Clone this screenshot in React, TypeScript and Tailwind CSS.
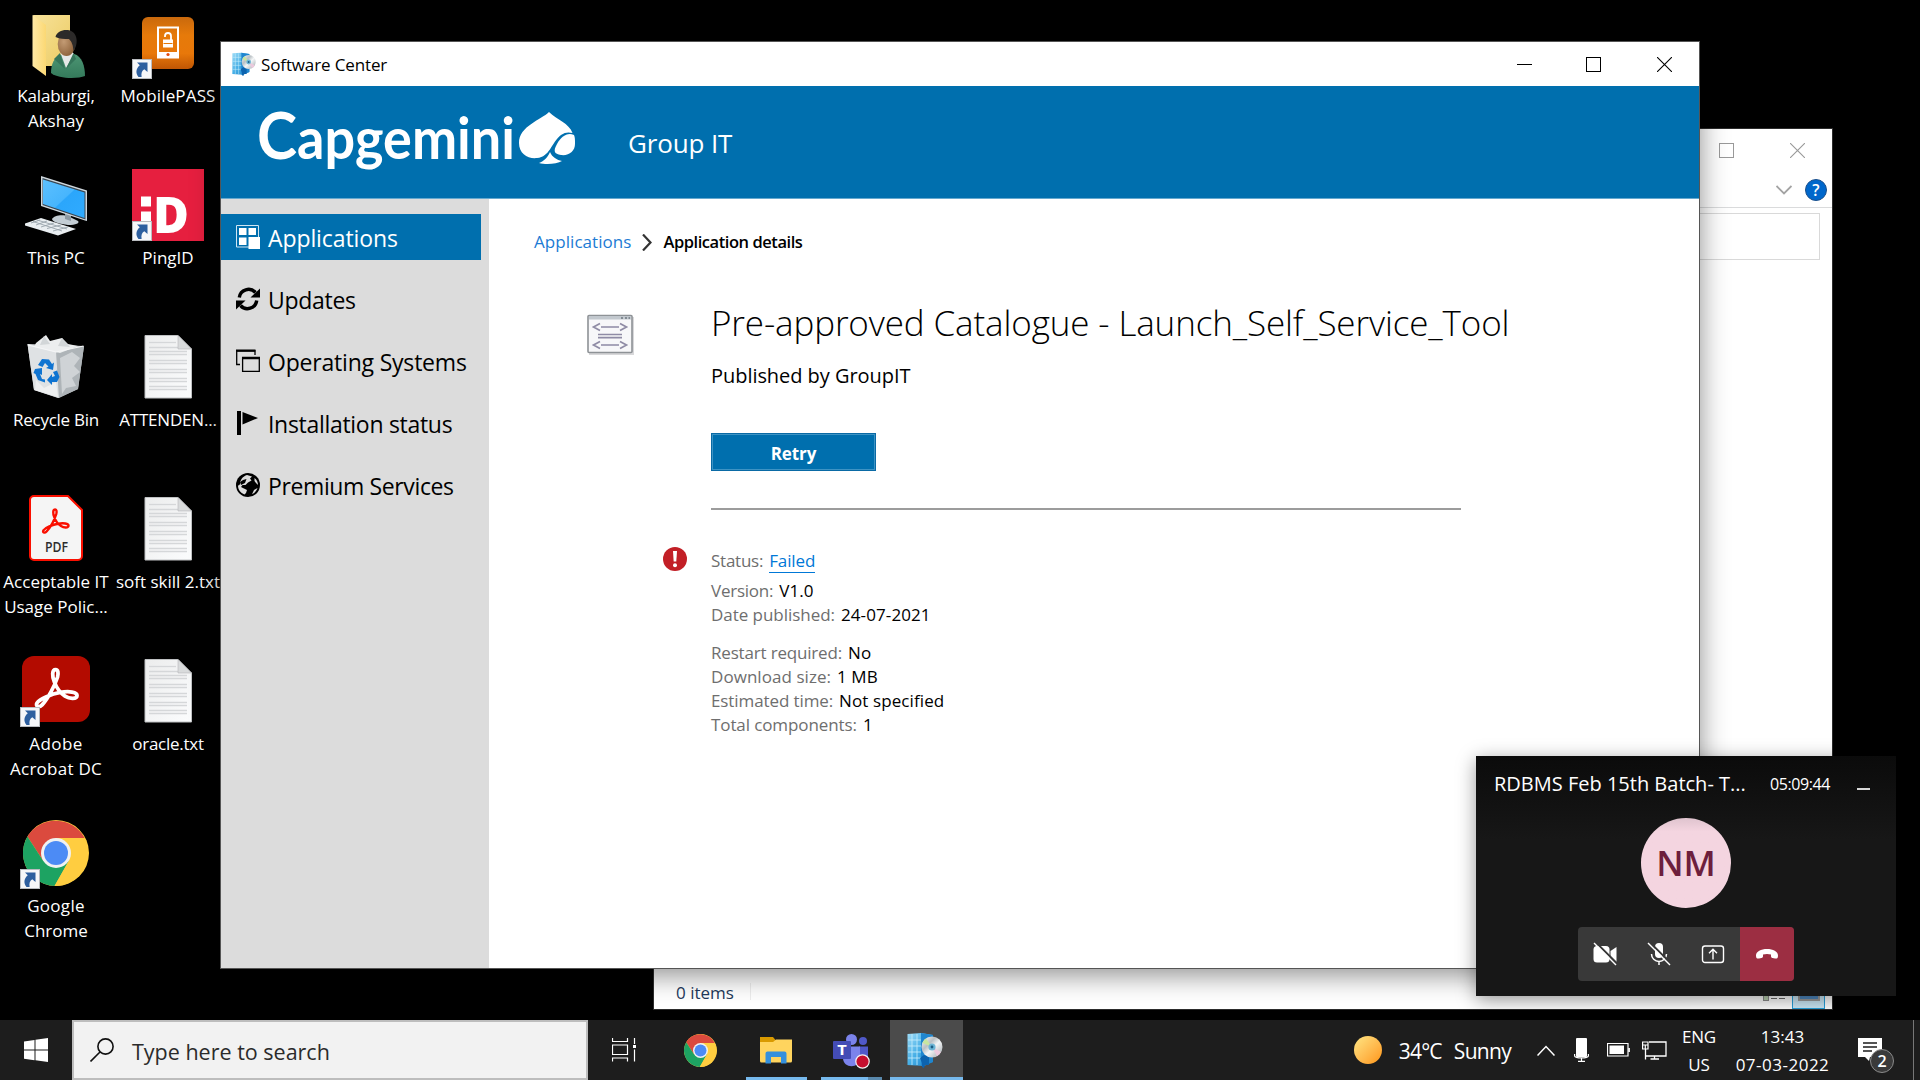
import React from "react";

/* ---------- desktop icons ---------- */

function ShortcutArrow() {
  return (
    <svg className="absolute bottom-0 left-0 h-5 w-5" viewBox="0 0 20 20">
      <rect x="0.5" y="0.5" width="19" height="19" fill="#f6f7f9" stroke="#b9bcc0" />
      <path d="M5 3.5 H15.5 V13 L12.3 10.2 C9.8 11.6 9 14 9.6 18 H6.5 C3.4 14.500 3.800 9.500 7.800 6.300 Z" fill="#2d5f9f" />
    </svg>
  );
}

function UserFolder() {
  return (
    <svg className="h-[72px] w-[72px]" viewBox="0 0 72 72">
      <defs>
        <linearGradient id="uf1" x1="0" y1="0" x2="1" y2="1">
          <stop offset="0" stopColor="#f7e29a" />
          <stop offset="1" stopColor="#eccb62" />
        </linearGradient>
        <linearGradient id="uf2" x1="0" y1="0" x2="1" y2="0">
          <stop offset="0" stopColor="#ffe9a6" />
          <stop offset="1" stopColor="#fbd874" />
        </linearGradient>
        <linearGradient id="uf3" x1="0" y1="0" x2="0" y2="1">
          <stop offset="0" stopColor="#4d9674" />
          <stop offset="1" stopColor="#347a5b" />
        </linearGradient>
        <radialGradient id="uf4" cx="0.35" cy="0.4" r="0.7">
          <stop offset="0" stopColor="#c39b74" />
          <stop offset="1" stopColor="#8a5f38" />
        </radialGradient>
      </defs>
      <path d="M13 8 H50 V59 H26 Z" fill="url(#uf1)" />
      <path d="M12.500 8 L26 18 V69 L12.500 59 Z" fill="url(#uf2)" />
      <path d="M31 66 C31 57 34 50 41 48 L54 47 C62 49 65 59 65 69 C58 72 38 72 31 66 Z" fill="url(#uf3)" />
      <path d="M40.500 46 L46 61 L54 47 L50 42 Z" fill="#e6e9e8" />
      <path d="M40 46 L45 62 L34 52 Z" fill="#35755a" />
      <path d="M53.500 46 L56 52 L46 62 Z" fill="#35755a" />
      <ellipse cx="46.500" cy="37" rx="8.800" ry="12" fill="url(#uf4)" />
      <path d="M35.500 30 C37 23 47 21.500 52 24.500 C58 28 58 38 53.500 44 C53 38 52 35 49 32 C44 32 40 32 35.500 30 Z" fill="#2c2a29" />
    </svg>
  );
}

function MobilePass() {
  return (
    <svg className="h-[72px] w-[72px]" viewBox="0 0 72 72">
      <defs>
        <linearGradient id="mp" x1="0" y1="0" x2="0" y2="1">
          <stop offset="0" stopColor="#c9690d" />
          <stop offset="0.35" stopColor="#e67a0a" />
          <stop offset="0.7" stopColor="#e8780a" />
          <stop offset="1" stopColor="#c05604" />
        </linearGradient>
      </defs>
      <rect x="10" y="10" width="52" height="52" rx="6" fill="url(#mp)" />
      <rect x="26" y="20.500" width="20" height="30" fill="none" stroke="#fff" strokeWidth="2" />
      <path d="M25 45 H47 V51 H25 Z" fill="#fff" />
      <circle cx="36" cy="47.500" r="1.600" fill="#e34b10" />
      <rect x="31" y="32.500" width="10" height="8" fill="#fff" />
      <path d="M31.500 36.500 H40.500" stroke="#e67a0a" strokeWidth="1" />
      <path d="M33 30 V29 A3 3 0 0 1 39 29 V33" fill="none" stroke="#fff" strokeWidth="1.800" />
    </svg>
  );
}

function ThisPc() {
  return (
    <svg className="h-[72px] w-[72px]" viewBox="0 0 72 72">
      <defs>
        <linearGradient id="pc" x1="0" y1="0" x2="1" y2="1">
          <stop offset="0" stopColor="#5cc0ff" />
          <stop offset="0.5" stopColor="#47b5fd" />
          <stop offset="0.52" stopColor="#2ba6fb" />
          <stop offset="1" stopColor="#30abff" />
        </linearGradient>
      </defs>
      <path d="M32 50 C34 46 44 45 50 48 L58 52 C60 54 56 56 48 56 C40 55 32 53 32 50 Z" fill="#c3cdd4" />
      <path d="M45 44 L51 46 V52 L45 50 Z" fill="#8d9aa3" />
      <path d="M21 7 L67 21.500 V52 L65 51.500 L21 37 Z" fill="#cfd8de" />
      <path d="M22.500 9 L65.500 22.500 V50.500 L22.500 36 Z" fill="#3a4650" />
      <path d="M23 10.500 L64.500 23.500 V49 L23 35 Z" fill="url(#pc)" />
      <path d="M5 54.500 L21 49 L56 60 L38 66.500 L5 56.500 Z" fill="#e9eef1" />
      <path d="M11 54 L20 51 M16 56 L27 52 M21 58 L34 54 M27 59.500 L41 56 M33 62 L48 58 M13 52.500 L42 62 M17 51 L47 60" stroke="#98a4ac" strokeWidth="0.900" />
    </svg>
  );
}

function PingId() {
  return (
    <svg className="h-[72px] w-[72px] overflow-visible" viewBox="0 0 72 72">
      <rect width="72" height="72" fill="#e61f3f" />
      <rect x="9" y="27.500" width="10" height="10" fill="#fff" />
      <rect x="9" y="42.500" width="10" height="20" fill="#fff" />
      <text x="21" y="63.500" fontFamily="Open Sans, sans-serif" fontWeight="800" fontSize="49.500" fill="#fff" textLength="36" lengthAdjust="spacingAndGlyphs">D</text>
    </svg>
  );
}

function RecycleBin() {
  return (
    <svg className="h-[72px] w-[72px]" viewBox="0 3 72 72">
      <path d="M7.500 16 L64 18 L58 61 L38 70 L14 62 Z" fill="#c9cdd0" />
      <path d="M7.500 16 L36 22 L39 70 L14 62 Z" fill="#dfe2e4" />
      <path d="M36 22 L64 18 L58 61 L39 70 Z" fill="#aeb4b8" />
      <path d="M52 24 L60 30 L54 38 L60 44 L52 50 L56 58 L46 60 L42 66 L40 30 Z" fill="#cfd3d6" />
      <path d="M16 15 L26 7 L30 13 L42 10 L48 16 L58 18 L40 25 L14 19 Z" fill="#eceeef" />
      <path d="M24 8 L30 16 L20 17 Z M42 10 L50 19 L38 18 Z" fill="#d2d6d8" />
      <path d="M8 17 L36 24 L63.500 18" fill="none" stroke="#f5f6f7" strokeWidth="1.200" />
      <path d="M16 52 L24 60 L36 54 L38 69 L15 62 Z" fill="#eff0f1" />
      <g fill="#0f74d1">
        <path d="M18 37 L22 31 L29 31.500 L32 36 L34 34.500 L33 42 L26 40 L28.500 38.500 L25 35 L22.500 39 Z" />
        <path d="M15 41 L22 40 L22 47 L20 46 L22 51 L25 51.500 V54.500 L18 52 L15.500 46 L13.500 45 Z" />
        <path d="M27 52 L32 46 V49 L35 48 L33 44 L37 42.500 L39.500 49 L37 54 L32 54 V57 Z" />
      </g>
    </svg>
  );
}

function TextFile() {
  const rows = [14, 19, 23, 26, 32, 35, 41, 44, 50, 53, 58, 61];
  return (
    <svg className="h-[72px] w-[72px]" viewBox="0 0 72 72">
      <defs>
        <linearGradient id="tf" x1="0" y1="0" x2="1" y2="1">
          <stop offset="0" stopColor="#eceded" />
          <stop offset="1" stopColor="#fbfcfd" />
        </linearGradient>
      </defs>
      <path d="M13 4.500 H46 L59.500 18 V67 H13 Z" fill="url(#tf)" stroke="#bfc1c3" />
      {rows.map((y) => (
        <path key={y} d={`M17 ${y - 2.5} H${y < 18 ? 44 : 55}`} stroke="#d5d7d9" strokeWidth="1.300" />
      ))}
      <path d="M46 4.500 V18 H59.500 Z" fill="#d9dbdc" stroke="#b5b7b9" strokeWidth="0.600" />
    </svg>
  );
}

const acrobatPath =
  "M11.500 2.500 C9.500 2.500 9.600 6 10.800 9 C11.800 11.600 14 15 16.500 16.600 C19 18.200 22.800 18.200 22.900 16.300 C23 14.300 18.500 13.800 14 14.600 C9.500 15.400 3 18 1.600 20.200 C0.600 22 2.600 23 4.300 21.200 C7.500 17.800 11 11 12.500 6.500 C13.100 4.300 12.800 2.500 11.500 2.500 Z";

function PdfFile() {
  return (
    <svg className="h-[72px] w-[72px]" viewBox="0 0 72 72">
      <path d="M14 3 H48 L62 17 V63 A4 4 0 0 1 58 67 H14 A4 4 0 0 1 10 63 V7 A4 4 0 0 1 14 3 Z" fill="#f5f5f5" stroke="#fa0f00" strokeWidth="2" />
      <path d={acrobatPath} transform="translate(21.500 13.500) scale(1.180)" fill="none" stroke="#fa0f00" strokeWidth="2" />
      <text x="25" y="59" fontFamily="Open Sans, sans-serif" fontWeight="600" fontSize="14.500" fill="#2c2c2c" textLength="23" lengthAdjust="spacingAndGlyphs">PDF</text>
    </svg>
  );
}

function Acrobat() {
  return (
    <svg className="h-[72px] w-[72px]" viewBox="0 0 72 72">
      <rect x="2" y="1" width="68" height="66" rx="12" fill="#b30b00" />
      <path d={acrobatPath} transform="translate(14 10) scale(1.880)" fill="none" stroke="#fff" strokeWidth="2" />
    </svg>
  );
}

function Chrome({ className }: { className: string }) {
  return (
    <svg className={className} viewBox="0 0 66 66">
      <circle cx="33" cy="33" r="33" fill="#ffcd40" />
      <path d="M33 18 H61.600 A33 33 0 0 0 4.400 16.500 L20 40.500 Z" fill="#db4a3e" />
      <path d="M4.400 16.500 A33 33 0 0 0 31.500 66 L46 40.500 L20 40.500 Z" fill="#1da362" />
      <path d="M46 40.500 L31.500 66 A33 33 0 0 0 61.600 18 H33 Z" fill="#ffcd40" />
      <circle cx="33" cy="33" r="15" fill="#f1f1f1" />
      <circle cx="33" cy="33" r="12" fill="#4c8bf5" />
    </svg>
  );
}

function DesktopIcon({ icon, lines, shortcut }: { icon: React.ReactNode; lines: React.ReactNode; shortcut?: boolean }) {
  return (
    <div className="flex h-[162px] w-28 flex-col items-center pt-[7px]">
      <div className="relative h-[72px] w-[72px]">
        {icon}
        {shortcut && <ShortcutArrow />}
      </div>
      <div className="mt-[4px] text-center text-[17px] leading-[25px] whitespace-nowrap text-white">{lines}</div>
    </div>
  );
}

/* ---------- shared window parts ---------- */

function SoftwareIcon({ className }: { className: string }) {
  return (
    <svg className={className} viewBox="0 0 36 36">
      <defs>
        <linearGradient id="sw" x1="0" y1="0" x2="1" y2="1">
          <stop offset="0" stopColor="#9fdcf7" />
          <stop offset="0.5" stopColor="#45aee6" />
          <stop offset="1" stopColor="#1a7cc4" />
        </linearGradient>
        <linearGradient id="cd" x1="0" y1="0" x2="1" y2="1">
          <stop offset="0" stopColor="#ffffff" />
          <stop offset="0.35" stopColor="#b9c0c4" />
          <stop offset="0.55" stopColor="#f4f6f7" />
          <stop offset="1" stopColor="#9aa2a8" />
        </linearGradient>
      </defs>
      <path d="M0.500 2 L14 1 L26 3 V30 L17 34 L0.500 33 Z" fill="url(#sw)" />
      <path d="M14 1 V34 L26 30 V3 Z" fill="#1f86cf" />
      <path d="M1 8 H14 M1 14 H14 M1 20 H14 M1 26 H14 M5 2 V33 M10 2 V33" stroke="#c9effc" strokeWidth="0.800" />
      <path d="M13 26 L17 23 L22 25 V33 L18 33 L17 36 L15 35 V31 Z" fill="#0d63ae" />
      <circle cx="25" cy="15" r="10.500" fill="url(#cd)" />
      <path d="M25 15 L15.500 11 A10.500 10.500 0 0 1 19 6.500 Z" fill="#c7e6a0" />
      <path d="M25 15 L34 20 A10.500 10.500 0 0 1 30 24.300 Z" fill="#ecc9dd" />
      <circle cx="25" cy="15" r="3.600" fill="#6fb6d6" />
      <circle cx="25" cy="15" r="1.400" fill="#1e5f86" />
    </svg>
  );
}

function Maximize({ className }: { className: string }) {
  return (
    <svg className={className} viewBox="0 0 15 15">
      <rect x="0.500" y="0.500" width="14" height="14" fill="none" stroke="currentColor" />
    </svg>
  );
}
function Close({ className }: { className: string }) {
  return (
    <svg className={className} viewBox="0 0 15 15">
      <path d="M0 0 L15 15 M15 0 L0 15" stroke="currentColor" strokeWidth="1.100" />
    </svg>
  );
}

/* ---------- explorer window behind ---------- */

function ExplorerWindow() {
  return (
    <div className="absolute top-[128px] left-[653px] flex h-[882px] w-[1180px] flex-col border border-[#2c2c2c] bg-white">
      <div className="flex h-[44px] justify-end pt-[14px] pr-[27px] text-[#999]">
        <Maximize className="mr-[56px] h-[15px] w-[15px]" />
        <Close className="h-[15px] w-[15px]" />
      </div>
      <div className="flex h-[35px] items-center justify-end gap-[13px] border-b border-[#dadbdc] pr-[5px]">
        <svg className="h-[10px] w-4" viewBox="0 0 16 10">
          <path d="M0.500 1 L8 8.500 L15.500 1" fill="none" stroke="#a3a3a3" strokeWidth="1.800" />
        </svg>
        <div className="flex h-[22px] w-[22px] items-center justify-center rounded-full border border-[#1a4f8c] bg-[#0067cb] text-[16px] leading-none font-semibold text-white">?</div>
      </div>
      <div className="mt-[5px] mr-[12px] h-[47px] border border-[#d9d9d9]" />
      <div className="mt-auto flex h-[41px] items-end pl-[22px]">
        <span className="mb-[4px] text-[17px] text-[#1e395b]">0 items</span>
        <div className="mb-[9px] ml-[16px] h-[17px] w-px bg-[#ededed]" />
        <div className="ml-auto flex items-end pr-[7px]">
          <div className="mb-[8px] h-[10px] w-[6px] border border-[#8c8c8c] bg-[#b8cfae]" />
          <div className="mr-[7px] mb-[10px] ml-[2px] flex gap-[2px]">
            <div className="h-px w-[6px] bg-[#666]" />
            <div className="h-px w-[6px] bg-[#666]" />
          </div>
          <div className="flex h-[31px] w-[33px] items-end justify-center border border-[#26a0da] bg-[#cbe8f6] pb-[7px]">
            <div className="h-4 w-[22px] border-2 border-[#9c9c9c] bg-[#4e88bf]" />
          </div>
        </div>
      </div>
    </div>
  );
}

/* ---------- Software Center ---------- */

function CapgeminiLogo() {
  return (
    <svg className="h-[80px] w-[320px] overflow-visible" viewBox="0 0 320 80">
      <text x="-1" y="56.500" fontFamily="Lato, sans-serif" fontWeight="700" fontSize="58" fill="#fff" textLength="258" lengthAdjust="spacingAndGlyphs">
        <tspan fontSize="65">C</tspan>apgemini
      </text>
      <path d="M291 10 C283 18 261 24 261 41 C261 52 270 57 279 56 C292 55 293 41 303 33 C307 30 311 30 314.500 31 C311 21 299 18 291 10 Z" fill="#fff" />
      <path d="M316 33 C309 30 303 35 299 42 C295 49 296 52 303 53 C311 54 317 49 317 42 C317 38 317 35 316 33 Z" fill="#fff" />
      <path d="M292 50 C290 55 286 59 281 61 C288 63 299 62 304 59 C299 58 294 55 292 50 Z" fill="#fff" />
    </svg>
  );
}

const navIcons = {
  apps: (
    <svg className="h-6 w-6" viewBox="0 0 24 24">
      <path d="M0.500 0.500 H22.500 V22 H0.500 Z" fill="none" stroke="#cfe5f3" />
      <path d="M3 3 H10.500 V10 H3 Z M12.500 3 H20 V10 H12.500 Z M3 12.500 H10.500 V20 H3 Z M12.500 12 H24 V24 H12.500 Z" fill="#fff" />
    </svg>
  ),
  updates: (
    <svg className="h-6 w-6" viewBox="0 0 24 24">
      <path d="M3.300 10.500 A9.300 9.300 0 0 1 19.500 5.500" fill="none" stroke="#000" strokeWidth="3.400" />
      <path d="M24 1.500 V10.500 H14.500 Z" fill="#000" />
      <path d="M20.700 13.500 A9.300 9.300 0 0 1 4.500 18.500" fill="none" stroke="#000" strokeWidth="3.400" />
      <path d="M0 22.500 V13.500 H9.500 Z" fill="#000" />
    </svg>
  ),
  os: (
    <svg className="h-6 w-6" viewBox="0 0 24 24">
      <path d="M4 15.500 H0.700 V2 H19 V6" fill="none" stroke="#000" strokeWidth="1.300" />
      <path d="M0 1.500 H19.500" stroke="#000" strokeWidth="2" />
      <path d="M6.600 9 H23.300 V22.300 H6.600 Z" fill="none" stroke="#000" strokeWidth="1.300" />
      <path d="M6 9 H24" stroke="#000" strokeWidth="2.500" />
    </svg>
  ),
  flag: (
    <svg className="h-6 w-6" viewBox="0 0 24 24">
      <path d="M1 0 H5 V24 H1 Z M6.500 1 L22 7 L6.500 13.500 Z" fill="#000" />
    </svg>
  ),
  globe: (
    <svg className="h-6 w-6" viewBox="0 0 24 24">
      <circle cx="12" cy="12" r="12" fill="#000" />
      <path d="M11 2 L16 3.500 L14 5.500 L15.500 7.500 L12 9.500 L9.500 12 L6.500 12 L5 14 L8 15.500 L11 17 L10 20 L8.500 21.500 C4.500 20 2 16.500 2 12.500 C3.500 12.500 4.500 11 4 9 L5.500 6 C7 4 9 2.500 11 2 Z" fill="#dcdcdc" />
      <path d="M4 9 L7 7 L10.500 6 L9 10 L5 12 Z" fill="#000" />
      <path d="M18.500 5 C21 7 22 9.500 22 12 L20 10 L18.500 8 Z M21.500 15 C20.500 18 18.500 20 16 21.200 L18 17 Z" fill="#dcdcdc" />
    </svg>
  ),
};

function NavItem({ icon, label, active, tracking }: { icon: React.ReactNode; label: string; active?: boolean; tracking: string }) {
  return (
    <div className={`flex h-[46px] w-[260px] items-center gap-2 pl-[15px] text-[23px] ${active ? "bg-[#006fae] text-white" : "text-black"}`}>
      {icon}
      <span className={`pt-[2px] whitespace-nowrap ${tracking}`}>{label}</span>
    </div>
  );
}

function Detail({ label, value, tracking }: { label: string; value: string; tracking: string }) {
  return (
    <div className="flex h-6 items-center gap-[6px] leading-6">
      <span className={`text-[#6e6e6e] ${tracking}`}>{label}</span>
      <span className="tracking-[0.1px]">{value}</span>
    </div>
  );
}

function SoftwareCenter() {
  return (
    <div className="absolute top-[41px] left-[220px] flex h-[928px] w-[1480px] flex-col border border-[#555] bg-white shadow-[0_6px_26px_rgba(0,0,0,0.45)]">
      <div className="flex h-[44px] items-center pr-[27px] pl-[11px]">
        <SoftwareIcon className="h-6 w-6" />
        <span className="ml-[5px] pt-[2px] text-[17px] tracking-[-0.13px]">Software Center</span>
        <div className="mr-[54px] ml-auto h-px w-[15px] bg-black" />
        <Maximize className="mr-[56px] h-[15px] w-[15px]" />
        <Close className="h-[15px] w-[15px]" />
      </div>
      <div className="flex h-[113px] items-center border-b border-[#66a9cf] bg-[#006fae] pl-[37px] text-white">
        <CapgeminiLogo />
        <span className="ml-[50px] pt-[2px] text-[26px] tracking-[-0.15px]">Group IT</span>
      </div>
      <div className="flex flex-1">
        <nav className="flex w-[268px] flex-col gap-4 bg-[#dcdcdc] pt-[15px]">
          <NavItem icon={navIcons.apps} label="Applications" active tracking="tracking-[-0.1px]" />
          <NavItem icon={navIcons.updates} label="Updates" tracking="tracking-[-0.3px]" />
          <NavItem icon={navIcons.os} label="Operating Systems" tracking="tracking-[-0.2px]" />
          <NavItem icon={navIcons.flag} label="Installation status" tracking="tracking-[-0.3px]" />
          <NavItem icon={navIcons.globe} label="Premium Services" tracking="tracking-[-0.38px]" />
        </nav>
        <main className="flex flex-1 flex-col pt-[31px] text-[17px] text-black">
          <div className="flex h-6 items-center pl-[45px]">
            <span className="tracking-[0.05px] text-[#1c7bd4]">Applications</span>
            <svg className="mx-[11px] h-[17px] w-[10px]" viewBox="0 0 10 17">
              <path d="M1 0.500 L8.500 8.500 L1 16.500" fill="none" stroke="#333" strokeWidth="2.200" />
            </svg>
            <span className="text-[16.500px] font-semibold tracking-[-0.45px]">Application details</span>
          </div>
          <div className="mt-[44px] flex">
            <div className="w-[222px] pt-[16px] pl-[98px]">
              <svg className="h-[42px] w-[48px]" viewBox="0 0 48 42">
                <rect x="2" y="3" width="45" height="38" fill="#d8d8da" />
                <rect x="1" y="1.500" width="44" height="37" rx="1" fill="#f7f7f9" stroke="#8e9296" strokeWidth="1.600" />
                <rect x="2" y="2" width="42" height="3.500" fill="#c2c8ce" />
                <path d="M34 4 H36 M38 4 H40 M41.500 4 H43" stroke="#6d7780" strokeWidth="1.500" />
                <g fill="none" stroke="#8f8ba5" strokeWidth="1.700">
                  <path d="M13 9.500 L6.500 13 L13 16.500 M33 9.500 L39.500 13 L33 16.500 M14 13 H32 M13 27.500 L6.500 31 L13 34.500 M33 27.500 L39.500 31 L33 34.500 M14 31 H32 M11 20.500 H35 M11 23.700 H35" />
                </g>
              </svg>
            </div>
            <div className="flex flex-col items-start">
              <h1 className="pt-px text-[35px] leading-[48px] font-light tracking-[-0.13px] whitespace-nowrap">Pre-approved Catalogue - Launch_Self_Service_Tool</h1>
              <p className="mt-[15px] text-[20px] leading-7 tracking-[-0.05px]">Published by GroupIT</p>
              <button className="mt-[43px] flex h-[38px] w-[165px] items-center justify-center border border-[#0a6aa5] bg-[#006fae] pt-[3px] text-[17px] font-bold text-white shadow-[inset_0_0_0_1px_#3d93c4]">
                <span className="tracking-[-0.1px]">Retry</span>
              </button>
              <div className="mt-[37px] h-[2px] w-[750px] bg-[#9c9c9c]" />
            </div>
          </div>
          <div className="mt-[38px] flex pl-[174px]">
            <svg className="mt-[-1px] mr-6 h-6 w-6" viewBox="0 0 24 24">
              <circle cx="12" cy="12" r="12" fill="#c21f26" />
              <path d="M10 4 H14 L13.300 14.500 H10.700 Z" fill="#fff" />
              <circle cx="12" cy="18.300" r="2" fill="#fff" />
            </svg>
            <div className="pt-px">
              <div className="flex h-6 items-start gap-[6px] leading-[23px]">
                <span className="tracking-[-0.25px] text-[#6e6e6e]">Status:</span>
                <span className="border-b border-[#0078d7] tracking-[-0.1px] text-[#0078d7]">Failed</span>
              </div>
              <div className="mt-[6px]">
                <Detail label="Version:" value="V1.0" tracking="tracking-[-0.25px]" />
                <Detail label="Date published:" value="24-07-2021" tracking="tracking-[-0.04px]" />
              </div>
              <div className="mt-[14px]">
                <Detail label="Restart required:" value="No" tracking="tracking-[-0.18px]" />
                <Detail label="Download size:" value="1 MB" tracking="tracking-[0.05px]" />
                <Detail label="Estimated time:" value="Not specified" tracking="tracking-[-0.1px]" />
                <Detail label="Total components:" value="1" tracking="tracking-[-0.1px]" />
              </div>
            </div>
          </div>
        </main>
      </div>
    </div>
  );
}

/* ---------- Teams call card ---------- */

function CallCard() {
  return (
    <div className="absolute top-[756px] left-[1476px] flex h-[240px] w-[420px] flex-col items-center bg-linear-to-b from-[#0b0b0b] via-[#171717] via-35% to-[#171717] text-white shadow-[0_4px_18px_rgba(0,0,0,0.4)]">
      <div className="flex h-[56px] w-full items-center pl-[18px]">
        <span className="text-[20px] whitespace-nowrap">RDBMS Feb 15th Batch- T...</span>
        <span className="ml-auto text-[16px] tracking-[-0.4px]">05:09:44</span>
        <div className="mt-[10px] mr-[26px] ml-[27px] h-[1.500px] w-[13px] bg-[#d8d8d8]" />
      </div>
      <div className="mt-[6px] flex h-[90px] w-[90px] items-center justify-center rounded-full bg-linear-to-b from-[#dfc3ce] to-[#f4d5e0] to-15% text-[35px] font-semibold text-[#6d1f3d]">
        <span>NM</span>
      </div>
      <div className="mt-[19px] flex h-[54px] overflow-hidden rounded bg-[#393939]">
        <div className="flex w-[54px] items-center justify-center">
          <svg className="h-6 w-6" viewBox="0 0 24 24">
            <rect x="0.500" y="4" width="16" height="16.500" rx="3.500" fill="#fff" />
            <path d="M17.500 9 L23.500 5 V20 L17.500 15.500 Z" fill="#fff" />
            <path d="M2.500 0 L24 21.500" stroke="#393939" strokeWidth="2" />
            <path d="M1 1 L23 23" stroke="#fff" strokeWidth="1.400" />
          </svg>
        </div>
        <div className="flex w-[54px] items-center justify-center">
          <svg className="h-6 w-6" viewBox="0 0 24 24">
            <rect x="8" y="1" width="8" height="15" rx="4" fill="#fff" />
            <path d="M4.500 12 A7.500 7.500 0 0 0 19.500 12 M12 19.500 V23" fill="none" stroke="#fff" strokeWidth="1.500" />
            <path d="M2.500 0 L24 21.500" stroke="#393939" strokeWidth="2" />
            <path d="M1 1 L23 23" stroke="#fff" strokeWidth="1.400" />
          </svg>
        </div>
        <div className="flex w-[54px] items-center justify-center">
          <svg className="h-6 w-6" viewBox="0 0 24 24">
            <rect x="1.500" y="4" width="21" height="16.500" rx="2.500" fill="none" stroke="#fff" strokeWidth="1.400" />
            <path d="M12 17.500 V7.500 M8 11.300 L12 7.300 L16 11.300" fill="none" stroke="#fff" strokeWidth="1.400" />
          </svg>
        </div>
        <div className="flex w-[54px] items-center justify-center bg-[#9c2e42]">
          <svg className="h-6 w-6" viewBox="0 0 24 24">
            <path d="M12 7 C18 7 23 9.500 23 13.500 C23 16.200 22 16.800 20 16.500 L17.500 16 C16.300 15.700 16 15 16 14 V12.600 C13.500 11.800 10.500 11.800 8 12.600 V14 C8 15 7.700 15.700 6.500 16 L4 16.500 C2 16.800 1 16.200 1 13.500 C1 9.500 6 7 12 7 Z" fill="#fff" />
          </svg>
        </div>
      </div>
    </div>
  );
}

/* ---------- taskbar ---------- */

function Taskbar() {
  return (
    <div className="absolute bottom-0 left-0 flex h-[60px] w-full bg-[#1d1d1d] text-white">
      <div className="flex w-[72px] items-center justify-center">
        <svg className="h-6 w-6" viewBox="0 0 24 24">
          <path d="M0 3.500 L10.500 2 V11.500 H0 Z M11.500 1.800 L24 0 V11.500 H11.500 Z M0 12.500 H10.500 V22.200 L0 20.800 Z M11.500 12.500 H24 V24 L11.500 22.300 Z" fill="#fff" />
        </svg>
      </div>
      <div className="flex w-[516px] items-center border-2 border-[#bdbdbd] bg-[#f2f2f2] pl-4 text-[#2b2b2b]">
        <svg className="h-6 w-6" viewBox="0 0 24 24">
          <circle cx="15.500" cy="8.500" r="7.600" fill="none" stroke="#111" strokeWidth="1.600" />
          <path d="M10 14 L0.500 23.500" stroke="#111" strokeWidth="1.600" />
        </svg>
        <span className="ml-[18px] pt-[4px] text-[21.500px]">Type here to search</span>
      </div>
      <svg className="mt-[18px] ml-6 h-6 w-6" viewBox="0 0 24 24">
        <path d="M0.500 0 V3.500 H15.500 V0 M0.500 7 H15.500 V16.500 H0.500 Z M0.500 23.500 V20 H15.500 V23.500 M22.500 0 V6 M22.500 11.500 V23.500" fill="none" stroke="#fff" strokeWidth="1.200" />
        <rect x="21" y="7" width="3" height="3" fill="#fff" />
      </svg>
      <div className="ml-[48px] flex w-[33px] items-center">
        <Chrome className="h-[33px] w-[33px]" />
      </div>
      <div className="ml-[29px] flex w-[61px] flex-col border-b-[3px] border-[#76b9ed] pt-[17px] pl-[14px]">
        <svg className="h-[27px] w-8" viewBox="0 0 32 27">
          <path d="M0 0 H13 L15.500 3 V6 H0 Z" fill="#d99a00" />
          <path d="M0 5 H13 L16 2.500 H32 V24 A1.500 1.500 0 0 1 30.500 25.500 H1.500 A1.500 1.500 0 0 1 0 24 Z" fill="#ffd45e" />
          <path d="M5.500 26.500 V16.500 A2 2 0 0 1 7.500 14.500 H24.500 A2 2 0 0 1 26.500 16.500 V26.500 H21 V20 H11 V26.500 Z" fill="#3590dc" />
        </svg>
      </div>
      <div className="relative ml-[14px] w-[61px]">
        <svg className="mt-[13px] ml-3 h-9 w-[38px]" viewBox="0 0 38 36">
          <circle cx="18.500" cy="6.500" r="5.500" fill="#7b83eb" />
          <circle cx="30" cy="8" r="4" fill="#5059c9" />
          <path d="M26 13.500 H35 V24 C33 29 28 29 26 27 Z" fill="#5059c9" />
          <path d="M10 13.500 H27 V25 C27 36 10 36 10 25 Z" fill="#7b83eb" />
          <rect x="0" y="8" width="18" height="18" rx="1" fill="#444cb5" />
          <text x="4.300" y="22" fontFamily="Open Sans, sans-serif" fontWeight="700" fontSize="14.500" fill="#fff" textLength="9.500" lengthAdjust="spacingAndGlyphs">T</text>
          <circle cx="29.500" cy="28.500" r="6.700" fill="#c50f2e" stroke="#f3f3f3" strokeWidth="1.200" />
        </svg>
        <div className="absolute bottom-0 left-0 flex h-[3px] w-full">
          <div className="w-[47px] bg-[#76b9ed]" />
          <div className="w-[14px] bg-[#5a89ad]" />
        </div>
      </div>
      <div className="ml-2 flex w-[73px] border-b-[3px] border-[#76b9ed] bg-[#4b4b4b] pt-3 pl-[17px]">
        <SoftwareIcon className="h-9 w-9" />
      </div>
      <div className="ml-auto flex items-center">
        <div className="h-[28px] w-[28px] rounded-full bg-linear-to-br from-[#ffe682] to-[#ff9500]" />
        <span className="ml-[17px] pt-[4px] text-[21px] tracking-[-0.8px]">34°C</span>
        <span className="ml-[12px] pt-[4px] text-[21px] tracking-[-0.7px]">Sunny</span>
        <svg className="ml-[26px] h-[11px] w-[18px]" viewBox="0 0 18 11">
          <path d="M0.500 10.500 L9 1.500 L17.500 10.500" fill="none" stroke="#fff" strokeWidth="1.500" />
        </svg>
        <svg className="ml-[19px] h-6 w-[15px]" viewBox="0 0 15 24">
          <rect x="2" y="0" width="11" height="19" rx="1" fill="#fff" />
          <path d="M0.600 16 V18 C1.500 20.500 13.500 20.500 14.400 18 V16 M7.500 20 V23 M4 23.400 H11" fill="none" stroke="#fff" strokeWidth="1.200" />
        </svg>
        <svg className="ml-[18px] h-[14px] w-[23px]" viewBox="0 0 23 14">
          <path d="M0.500 0.500 H21 V13 H0.500 Z M22.300 5 V9" fill="none" stroke="#fff" strokeWidth="1.200" />
          <rect x="2.500" y="2.500" width="14.500" height="8.500" fill="#fff" />
        </svg>
        <svg className="ml-[12px] h-[19px] w-[25px]" viewBox="0 0 25 19">
          <path d="M7 1 H24 V15 H3.500 M12.500 15 V18 M8.500 18 H17 M3.500 8 V18.500" fill="none" stroke="#fff" strokeWidth="1.300" />
          <path d="M0.600 1 H6 V8 H0.600 Z M0.600 4 H6 M3.300 4 V8" fill="none" stroke="#fff" strokeWidth="1.200" />
        </svg>
        <div className="ml-[14px] flex w-[36px] flex-col items-center pt-[2px] text-[17px] leading-7">
          <span className="tracking-[-0.2px]">ENG</span>
          <span>US</span>
        </div>
        <div className="ml-[18px] flex w-[95px] flex-col items-center pt-[2px] text-[17px] leading-7">
          <span>13:43</span>
          <span className="tracking-[0.5px]">07-03-2022</span>
        </div>
        <div className="relative ml-[28px] h-[38px] w-[38px]">
          <svg className="h-[38px] w-[38px] overflow-visible" viewBox="0 0 38 38">
            <path d="M0 7 H24 V26 H12 L11 30 L7 26 H0 Z" fill="#fff" />
            <path d="M5 12 H19 M5 16 H19 M5 20 H14" stroke="#1d1d1d" strokeWidth="1.400" />
          </svg>
          <div className="absolute top-[18px] left-[12px] flex h-6 w-6 items-center justify-center rounded-full border border-[#8a8a8a] bg-[#3a3a3a] text-[16px] leading-none font-semibold">2</div>
        </div>
        <div className="mr-[6px] ml-[17px] h-[60px] w-px bg-[#777]" />
      </div>
    </div>
  );
}

export default function App() {
  return (
    <div className="relative h-[1080px] w-[1920px] overflow-hidden bg-black font-['Open_Sans',sans-serif]">
      <div className="grid w-56 grid-flow-col grid-rows-6">
        <DesktopIcon icon={<UserFolder />} lines={<><span className="tracking-[-0.2px]">Kalaburgi,</span><br /><span>Akshay</span></>} />
        <DesktopIcon icon={<ThisPc />} lines={<span>This PC</span>} />
        <DesktopIcon icon={<RecycleBin />} lines={<span className="tracking-[-0.25px]">Recycle Bin</span>} />
        <DesktopIcon icon={<PdfFile />} lines={<><span>Acceptable IT</span><br /><span>Usage Polic...</span></>} />
        <DesktopIcon shortcut icon={<Acrobat />} lines={<><span className="tracking-[0.4px]">Adobe</span><br /><span className="tracking-[0.25px]">Acrobat DC</span></>} />
        <DesktopIcon shortcut icon={<Chrome className="mx-[3px] mt-[3px] h-[66px] w-[66px]" />} lines={<><span className="tracking-[0.3px]">Google</span><br /><span>Chrome</span></>} />
        <DesktopIcon shortcut icon={<MobilePass />} lines={<span className="tracking-[0.15px]">MobilePASS</span>} />
        <DesktopIcon shortcut icon={<PingId />} lines={<span>PingID</span>} />
        <DesktopIcon icon={<TextFile />} lines={<span className="tracking-[-0.2px]">ATTENDEN...</span>} />
        <DesktopIcon icon={<TextFile />} lines={<span>soft skill 2.txt</span>} />
        <DesktopIcon icon={<TextFile />} lines={<span className="tracking-[-0.25px]">oracle.txt</span>} />
      </div>
      <ExplorerWindow />
      <SoftwareCenter />
      <CallCard />
      <Taskbar />
    </div>
  );
}
